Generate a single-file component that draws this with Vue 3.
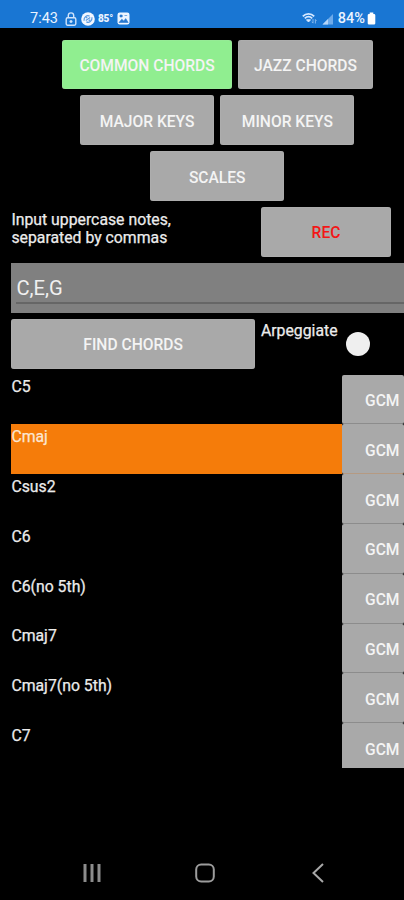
<script setup>
import { ref } from 'vue'

const notes = ref('C,E,G')
const selected = ref('Cmaj')
const chords = ['C5', 'Cmaj', 'Csus2', 'C6', 'C6(no 5th)', 'Cmaj7', 'Cmaj7(no 5th)', 'C7']
</script>

<template>
  <div class="screen">
    <header class="status">
      <span class="time">7:43</span>
      <svg class="lock" width="12" height="14" viewBox="0 0 12 14" fill="none" stroke="#cfe3fb" stroke-width="1.4">
        <path d="M3.3 6V3.6a2.7 2.7 0 0 1 5.4 0V6" />
        <rect x="1.2" y="5.8" width="9.6" height="7.4" rx="1.4" />
        <path d="M6 8v3M4.5 9.5h3" />
      </svg>
      <svg class="disc" width="14" height="14" viewBox="0 0 14 14">
        <circle cx="7" cy="7" r="6.8" fill="#f2f7ff" />
        <g fill="none" stroke="#5a9be0" stroke-width="1.2">
          <path d="M3 8.7C2.7 4.8 6 2.8 8.6 4.1M11 5.3c.4 3.9-2.9 5.9-5.6 4.6" />
          <path d="M4.8 8.5 9.2 5.5M5 6.2l1.2-1.2M7.8 9l1.3-1.3" />
        </g>
      </svg>
      <span class="temp">85°</span>
      <svg class="photo" width="13" height="13" viewBox="0 0 13 13">
        <rect x=".5" y=".5" width="12" height="12" rx="2.2" fill="#edf5ff" />
        <path d="M2 10.5 4.8 7.2l2 1.8 1.9-2.4 2.5 3.9zM3 3h2.2v2H3zM7.5 3.5h2.7" fill="#2878cf" stroke="#2878cf" stroke-width=".6" />
      </svg>
      <span class="spacer"></span>
      <svg class="wifi" width="15" height="13" viewBox="0 0 15 13" fill="none" stroke="#d6e8ff">
        <path d="M.8 4.3C4 1 9 1 12.2 4.3" stroke-width="1.8" />
        <path d="M2.8 6.4C5 4.3 8 4.3 10.2 6.4" stroke-width="1.8" />
        <path d="M4.5 7.8 6.5 10l2-2.2z" fill="#d6e8ff" />
        <path d="M11 7v4M9.8 9.8 11 11.2M13.4 11.5v-4M14.5 8.7l-1.1-1.2" stroke="#85b8ef" stroke-width="1" />
      </svg>
      <svg class="signal" width="12" height="12" viewBox="0 0 12 12">
        <path d="M.5 11.5 11 1v10.5z" fill="#6eabea" />
        <path d="M.5 11.5 6 6v5.5z" fill="#b5d5f8" />
      </svg>
      <span class="percent">84%</span>
      <svg class="battery" width="9" height="13" viewBox="0 0 9 13">
        <path d="M2.7.5h3.6v1.5H7A1.3 1.3 0 0 1 8.3 3.3v7.9A1.3 1.3 0 0 1 7 12.5H2A1.3 1.3 0 0 1 .7 11.2V3.3A1.3 1.3 0 0 1 2 2h.7z" fill="#fff" />
      </svg>
    </header>

    <main class="content">
      <nav class="modes">
        <div class="mode-row">
          <button class="btn common active"><span>COMMON CHORDS</span></button>
          <button class="btn"><span>JAZZ CHORDS</span></button>
        </div>
        <div class="mode-row">
          <button class="btn"><span>MAJOR KEYS</span></button>
          <button class="btn"><span>MINOR KEYS</span></button>
        </div>
        <div class="mode-row">
          <button class="btn"><span>SCALES</span></button>
        </div>
      </nav>

      <div class="prompt-row">
        <p class="prompt">Input uppercase notes,<br />separated by commas</p>
        <button class="btn rec"><span>REC</span></button>
      </div>

      <label class="field"><input v-model="notes" class="notes" type="text" /></label>

      <div class="find-row">
        <button class="btn find"><span>FIND CHORDS</span></button>
        <span class="arp-label">Arpeggiate</span>
        <span class="thumb"></span>
      </div>

      <ul class="chords">
        <li v-for="chord in chords" :key="chord" class="chord" :class="{ selected: chord === selected }" @click="selected = chord">
          <span class="chord-name">{{ chord }}</span>
          <button class="gcm">GCM</button>
        </li>
      </ul>
    </main>

    <footer class="navbar">
      <svg width="20" height="20" viewBox="0 0 20 20" fill="none" stroke="#8c8c8c" stroke-width="3">
        <path d="M3 1v18M10 1v18M17 1v18" />
      </svg>
      <svg width="20" height="20" viewBox="0 0 20 20" fill="none" stroke="#9c9c9c" stroke-width="2">
        <rect x="1.2" y="1.5" width="17.6" height="17" rx="5" />
      </svg>
      <svg width="20" height="20" viewBox="0 0 20 20" fill="none" stroke="#a8a8a8" stroke-width="2">
        <path d="M15 1 5.5 10l9.5 9" />
      </svg>
    </footer>
  </div>
</template>

<style>
body {
  background: #000;
}
</style>

<style scoped>
.screen {
  display: flex;
  flex-direction: column;
  width: 404px;
  height: 900px;
  overflow: hidden;
  background: #000;
  color: #ececec;
  font-family: Roboto, "Liberation Sans", sans-serif;
  font-size: 15.8px;
}
.status {
  display: flex;
  align-items: center;
  box-sizing: border-box;
  flex: none;
  height: 28.4px;
  padding: 9px 28px 0 30px;
  background: #1976d3;
  color: #eaf3ff;
  font-size: 14.5px;
  line-height: 20px;
}
.time {
  width: 35px;
}
.disc {
  margin-left: 4px;
}
.temp {
  width: 16px;
  margin: 0 3px 0 3px;
  font-size: 10px;
  font-weight: 900;
  letter-spacing: -0.2px;
}
.spacer {
  flex: 1;
}
.signal {
  margin: 0 4px 0 5px;
}
.percent {
  font-weight: 500;
}
.battery {
  margin-left: 2px;
}
.content {
  flex: 1;
  padding: 11.3px 0 0 11.4px;
}
.modes {
  display: flex;
  flex-direction: column;
  gap: 6px;
  padding-left: 19px;
}
.mode-row {
  display: flex;
  justify-content: center;
  gap: 6px;
}
.btn,
.gcm {
  flex: none;
  margin: 0;
  padding: 0;
  border: 0;
  background: #a9a9a9;
  color: #f4f4f4;
  font: 500 15.6px Roboto, "Liberation Sans", sans-serif;
  white-space: nowrap;
}
.btn {
  width: 134.3px;
  height: 49.8px;
  border-radius: 3px;
  box-shadow: inset 0 0 1px #d0d0d0;
}
.modes .btn {
  padding-top: 3px;
}
.modes .common {
  width: 170.5px;
}
.active {
  background: #90ee90;
}
.prompt-row {
  display: flex;
  justify-content: space-between;
  height: 49.8px;
  padding: 6px 13px 0 0;
}
.prompt {
  margin: 3.5px 0 0;
  line-height: 18.5px;
  -webkit-text-stroke: 0.25px #ececec;
}
.btn.rec {
  width: 130px;
  padding-top: 3px;
  color: #f31616;
}
.field {
  display: block;
  box-sizing: border-box;
  height: 50px;
  margin-top: 6px;
  padding: 5px 0 9px 5px;
  background: #808080;
}
.notes {
  display: block;
  box-sizing: border-box;
  width: 100%;
  height: 36px;
  padding: 6px 0 0;
  border: 0;
  border-bottom: 2px solid #666;
  outline: 0;
  background: none;
  color: #f0f0f0;
  font: 20.2px Roboto, "Liberation Sans", sans-serif;
}
.find-row {
  display: flex;
  height: 49.8px;
  margin: 6px 0;
}
.btn.find {
  width: 243.5px;
  padding-top: 3px;
}
.arp-label {
  width: 85px;
  margin: 2.4px 0 0 6px;
  line-height: 19px;
  -webkit-text-stroke: 0.25px #ececec;
}
.thumb {
  width: 24px;
  height: 24px;
  margin-top: 13px;
  border-radius: 50%;
  background: #efefef;
}
.chords {
  height: 393.7px;
  margin: 0;
  padding: 0;
  overflow: hidden;
  list-style: none;
}
.chord {
  display: flex;
  height: 49.8px;
}
.chord-name {
  flex: 1;
  padding-top: 2.7px;
  line-height: 19px;
  -webkit-text-stroke: 0.25px currentColor;
}
.selected .chord-name {
  background: #f57c0a;
  color: #fbe6d2;
}
.gcm {
  width: 62.5px;
  padding: 4px 0 0 19px;
  border-bottom: 1px solid #8c8c8c;
  border-radius: 2px;
}
.selected .gcm {
  border-bottom-color: #b59a82;
}
.navbar {
  display: flex;
  justify-content: space-between;
  flex: none;
  height: 37.5px;
  padding: 0 76px 0 82px;
}
</style>
